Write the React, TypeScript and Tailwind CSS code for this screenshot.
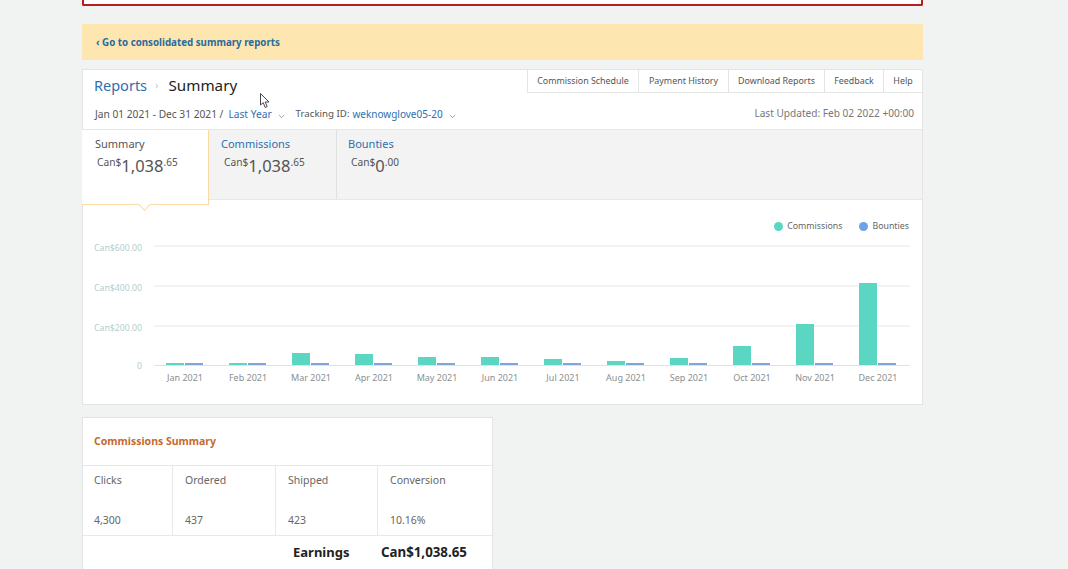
import { ChevronDown } from "lucide-react";

const months = [
  { name: "Jan 2021", top: 363 },
  { name: "Feb 2021", top: 363 },
  { name: "Mar 2021", top: 353 },
  { name: "Apr 2021", top: 354 },
  { name: "May 2021", top: 357 },
  { name: "Jun 2021", top: 357 },
  { name: "Jul 2021", top: 359 },
  { name: "Aug 2021", top: 361 },
  { name: "Sep 2021", top: 358 },
  { name: "Oct 2021", top: 346 },
  { name: "Nov 2021", top: 324 },
  { name: "Dec 2021", top: 283 },
];

const gridLines = [
  { label: "Can$600.00", y: 246 },
  { label: "Can$400.00", y: 286 },
  { label: "Can$200.00", y: 326 },
];

const navLinks = [
  { label: "Commission Schedule", width: "w-[110px]" },
  { label: "Payment History", width: "w-[90px]" },
  { label: "Download Reports", width: "w-[96px]" },
  { label: "Feedback", width: "w-[59px]" },
  { label: "Help", width: "w-[39px]" },
];

function Amount({ whole, cents }: { whole: string; cents: string }) {
  return (
    <div className="flex items-start pl-[2px] text-[#555]">
      <span className="text-[10.2px] leading-[14px] mt-[4px]">Can$</span>
      <span className="text-[16.5px] leading-[20px] mt-[5px]">{whole}</span>
      <span className="text-[10px] leading-[14px] mt-[4px]">.{cents}</span>
    </div>
  );
}

function Chart() {
  return (
    <svg width="839" height="204" viewBox="83 200 839 204" className="block">
      {gridLines.map((g) => (
        <g key={g.y}>
          <line x1="154" x2="910" y1={g.y} y2={g.y} stroke="#e6e8e8" strokeWidth="1" />
          <text x="142" y={g.y + 5} textAnchor="end" fontSize="8.7" fill="#b3cfc9">
            {g.label}
          </text>
        </g>
      ))}
      <text x="142" y="369" textAnchor="end" fontSize="8.7" fill="#b3cfc9">0</text>
      {months.map((m, i) => {
        const cx = 185 + i * 63;
        return (
          <g key={m.name}>
            <rect x={cx - 19} y={m.top} width="18" height={365 - m.top} fill="#5bd6c3" />
            <rect x={cx} y="363" width="18" height="2" fill="#7fa6dc" />
            <text x={cx} y="381" textAnchor="middle" fontSize="9" fill="#8a8f8f">
              {m.name}
            </text>
          </g>
        );
      })}
      <line x1="154" x2="910" y1="365.5" y2="365.5" stroke="#dfe2e6" strokeWidth="1" />
    </svg>
  );
}

export default function App() {
  return (
    <div className="relative h-[569px] overflow-hidden bg-[#f1f2f2] pl-[82px] font-['Noto_Sans','Open_Sans',sans-serif]">
      <div className="w-[841px]">
        <div className="h-[6px] rounded-b-[2px] border-2 border-t-0 border-[#b3201c] bg-white" />

        <div className="mt-[18px] flex h-[36px] items-center bg-[#fee6b0] pl-[14px] pt-[2px] text-[9.75px] font-bold text-[#2a6a9e]">
          ‹ Go to consolidated summary reports
        </div>

        <div className="mt-[9px] h-[336px] border border-[#e3e5e5] bg-white">
          <div className="flex h-[59px] justify-between">
            <div className="pl-[11px]">
              <div className="flex h-[31px] items-center">
                <span className="text-[14.5px] text-[#2f6fb0]">Reports</span>
                <span className="ml-[8px] text-[11px] text-[#c8cccc]">›</span>
                <span className="ml-[10px] text-[15.2px] text-[#222]">Summary</span>
              </div>
              <div className="mt-[6px] flex items-center text-[10.2px] text-[#555]">
                <span className="pl-[1px]">Jan 01 2021 - Dec 31 2021 /</span>
                <span className="ml-[5px] text-[#2f6fb0]">Last Year</span>
                <ChevronDown className="ml-[5px] mt-[3px] h-[9px] w-[9px]" strokeWidth={1.5} />
                <span className="ml-[10px] text-[9.7px]">Tracking ID:</span>
                <span className="ml-[3px] text-[10px] text-[#2f6fb0]">weknowglove05-20</span>
                <ChevronDown className="ml-[5px] mt-[3px] h-[9px] w-[9px]" strokeWidth={1.5} />
              </div>
            </div>
            <div className="flex flex-col items-end">
              <div className="flex h-[23px] border-b border-l border-[#e3e5e5]">
                {navLinks.map((l, i) => (
                  <div
                    key={l.label}
                    className={`flex items-center justify-center whitespace-nowrap text-[8.9px] text-[#555] ${l.width} ${i > 0 ? "border-l border-[#e3e5e5]" : ""}`}
                  >
                    {l.label}
                  </div>
                ))}
              </div>
              <div className="mt-[13px] pr-[8px] text-[10.1px] text-[#777]">Last Updated: Feb 02 2022 +00:00</div>
            </div>
          </div>

          <div className="flex h-[71px] border-y border-[#e7e9e9] bg-[#f3f3f3]">
            <div className="relative z-10 -ml-[1px] h-[75px] w-[127px] border-r border-b border-[#fbd9a5] bg-white pl-[13px] pt-[6px]">
              <div className="text-[11px] leading-[15px] text-[#555]">Summary</div>
              <Amount whole="1,038" cents="65" />
              <div className="absolute -bottom-[5px] left-[58px] h-[9px] w-[9px] rotate-45 border-r border-b border-[#fbd9a5] bg-white" />
            </div>
            <div className="w-[128px] border-r border-[#dfe1e1] pl-[12px] pt-[6px]">
              <div className="text-[11px] leading-[15px] text-[#2f6fb0]">Commissions</div>
              <div className="ml-[1px]">
                <Amount whole="1,038" cents="65" />
              </div>
            </div>
            <div className="pl-[11px] pt-[6px]">
              <div className="text-[11px] leading-[15px] text-[#2f6fb0]">Bounties</div>
              <div className="ml-[1px]">
                <Amount whole="0" cents="00" />
              </div>
            </div>
          </div>

          <div className="relative">
            <Chart />
            <div className="absolute right-[13px] top-[20px] flex items-center text-[8.8px] text-[#666]">
              <span className="h-[9px] w-[9px] rounded-full bg-[#5bd6c3]" />
              <span className="ml-[4px]">Commissions</span>
              <span className="ml-[17px] h-[9px] w-[9px] rounded-full bg-[#6da3e6]" />
              <span className="ml-[4px]">Bounties</span>
            </div>
          </div>
        </div>

        <div className="mt-[12px] w-[411px] border border-[#e3e5e5] bg-white">
          <div className="flex h-[48px] items-center border-b border-[#e7e9e9] pl-[11px] text-[10.5px] font-bold text-[#c7692d]">
            Commissions Summary
          </div>
          <div className="flex h-[70px] border-b border-[#e7e9e9] text-[10.5px] text-[#666]">
            <div className="flex w-[90px] flex-col justify-between border-r border-[#e7e9e9] pb-[6px] pl-[11px] pt-[7px]">
              <span>Clicks</span>
              <span>4,300</span>
            </div>
            <div className="flex w-[103px] flex-col justify-between border-r border-[#e7e9e9] pb-[6px] pl-[12px] pt-[7px]">
              <span>Ordered</span>
              <span>437</span>
            </div>
            <div className="flex w-[102px] flex-col justify-between border-r border-[#e7e9e9] pb-[6px] pl-[12px] pt-[7px]">
              <span>Shipped</span>
              <span>423</span>
            </div>
            <div className="flex flex-1 flex-col justify-between pb-[6px] pl-[12px] pt-[7px]">
              <span>Conversion</span>
              <span>10.16%</span>
            </div>
          </div>
          <div className="flex h-[33px] items-center pl-[210px] text-[13px] font-bold text-[#222]">
            <span className="w-[88px]">Earnings</span>
            <span className="text-[13.3px]">Can$1,038.65</span>
          </div>
        </div>
      </div>

      {/* mouse pointer from the recording */}
      <svg width="11" height="16" viewBox="0 0 11 16" className="absolute left-[260px] top-[93px]">
        <path d="M0.5 0.5 L0.5 12 L3.2 9.6 L5.2 14.5 L7.2 13.6 L5.2 9 L9 9 Z" fill="#fff" stroke="#333" strokeWidth="0.9" />
      </svg>
    </div>
  );
}
